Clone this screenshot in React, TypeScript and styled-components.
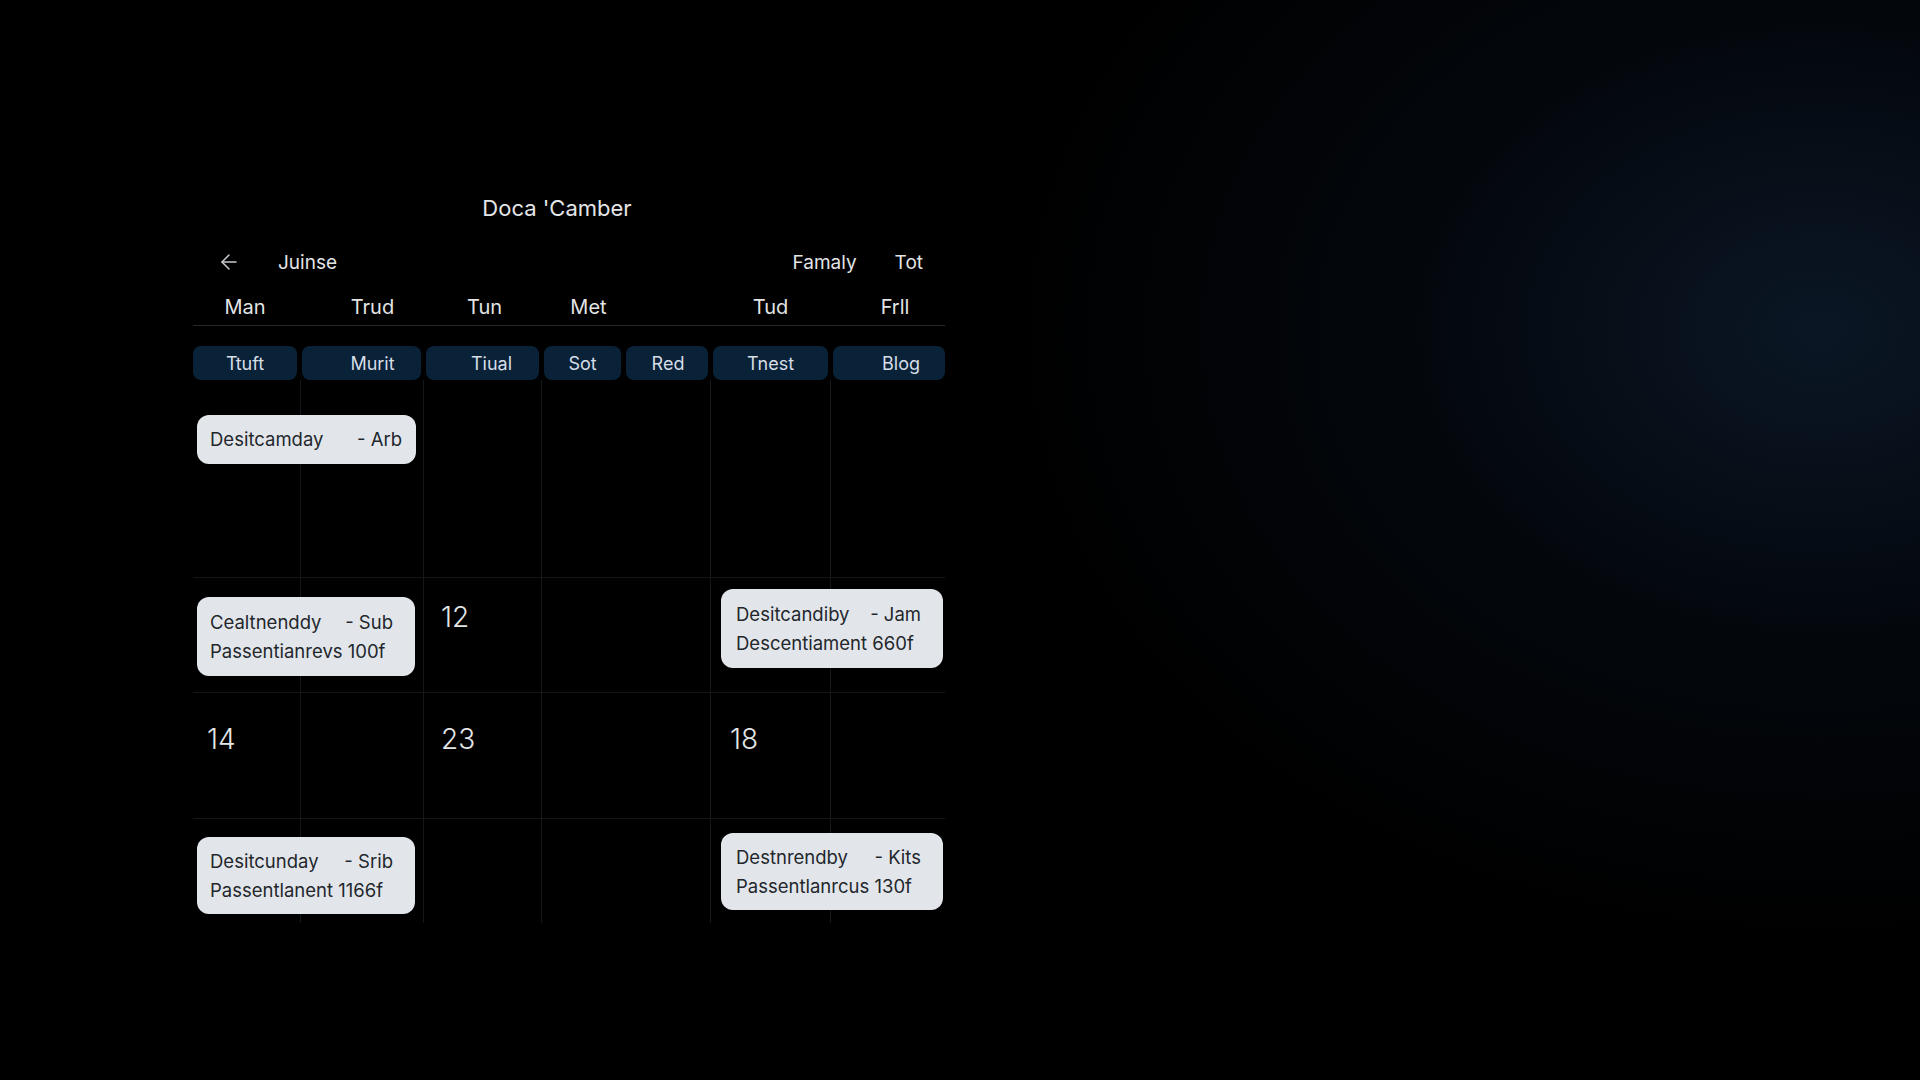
import styled, { createGlobalStyle } from "styled-components"
import { ArrowLeft } from "lucide-react"

const GlobalStyle = createGlobalStyle`
    html, body {
        margin: 0;
        padding: 0;
        background: #000000;
    }
    body {
        font-family: "Inter", "Liberation Sans", sans-serif;
        color: #e6e8ea;
    }
`

const Page = styled.div`
    width: 1920px;
    height: 1080px;
    overflow: hidden;
    background:
        radial-gradient(ellipse 820px 620px at 1820px 330px, rgba(12, 25, 41, 0.9) 0%, rgba(6, 13, 23, 0.55) 50%, rgba(0, 0, 0, 0) 100%),
        #000000;
    padding: 193px 0 0 193px;
    box-sizing: border-box;
`

const Calendar = styled.div`
    width: 752px;
    display: flex;
    flex-direction: column;
`

const Title = styled.h1`
    margin: 0;
    height: 30px;
    line-height: 30px;
    font-size: 22px;
    font-weight: 400;
    text-align: center;
    padding-right: 24px;
    color: #e4e6e8;
`

const NavRow = styled.div`
    margin-top: 20px;
    height: 38px;
    display: flex;
    align-items: center;
    padding: 0 22px 0 24px;
    font-size: 19px;
    color: #e2e4e6;
`

const BackButton = styled.span`
    display: flex;
    color: #c8cbce;
    margin-right: 37px;
`

const NavLinks = styled.div`
    margin-left: auto;
    display: flex;
    gap: 38px;
`

const cols = "104px 119px 113px 77px 82px 115px 112px"

const DayHeader = styled.div`
    margin-top: 8px;
    height: 36px;
    display: grid;
    grid-template-columns: ${cols};
    column-gap: 5px;
    align-items: center;
    border-bottom: 1px solid #24282c;
    font-size: 20px;
    color: #e2e4e6;
`

const DayLabel = styled.span<{ $shift?: number }>`
    text-align: center;
    padding-left: ${(p) => (p.$shift || 0) * 2}px;
`

const PillRow = styled.div`
    margin-top: 20px;
    display: grid;
    grid-template-columns: ${cols};
    column-gap: 5px;
`

const Pill = styled.div<{ $shift?: number }>`
    height: 34px;
    border-radius: 8px;
    background: #0a2237;
    display: flex;
    align-items: center;
    justify-content: center;
    padding-left: ${(p) => (p.$shift || 0) * 2}px;
    font-size: 18px;
    color: #d6dee8;
`

const Body = styled.div`
    display: grid;
    grid-template-columns: 107px 123px 118px 82px 87px 120px 115px;
    grid-template-rows: 197px 115px 126px 105px;
`

const Cell = styled.div<{ $left: boolean; $top: boolean }>`
    border-left: ${(p) => (p.$left ? "1px solid #15181b" : "none")};
    border-top: ${(p) => (p.$top ? "1px solid #14171a" : "none")};
`

type CardProps = {
    $row: number
    $col: number
    $top: number
    $left: number
    $right: number
    $h: number
    $padL: number
    $padR: number
}

const Card = styled.div<CardProps>`
    grid-row: ${(p) => p.$row};
    grid-column: ${(p) => p.$col} / span 2;
    align-self: start;
    margin: ${(p) => `${p.$top}px ${p.$right}px 0 ${p.$left}px`};
    height: ${(p) => p.$h}px;
    box-sizing: border-box;
    background: #e2e6eb;
    border-radius: 12px;
    padding: ${(p) => `0 ${p.$padR}px 0 ${p.$padL}px`};
    display: flex;
    flex-direction: column;
    justify-content: center;
    font-size: 18.5px;
    line-height: 29px;
    color: #23272c;
    z-index: 1;
`

const CardLine = styled.div`
    display: flex;
    justify-content: space-between;
    white-space: nowrap;
`

const DateNum = styled.div<{ $row: number; $col: number; $top: number; $left: number }>`
    grid-row: ${(p) => p.$row};
    grid-column: ${(p) => p.$col};
    align-self: start;
    margin: ${(p) => `${p.$top}px 0 0 ${p.$left}px`};
    font-size: 28px;
    font-weight: 300;
    line-height: 32px;
    color: #e4e6e8;
    z-index: 1;
`

const days = [
    { label: "Man", shift: 0 },
    { label: "Trud", shift: 11 },
    { label: "Tun", shift: 2 },
    { label: "Met", shift: 6 },
    { label: "", shift: 0 },
    { label: "Tud", shift: -1 },
    { label: "Frll", shift: 6 },
]

const pills = [
    { label: "Ttuft", shift: 0 },
    { label: "Murit", shift: 11 },
    { label: "Tiual", shift: 9 },
    { label: "Sot", shift: -2 },
    { label: "Red", shift: 1 },
    { label: "Tnest", shift: -2 },
    { label: "Blog", shift: 12 },
]

const events = [
    { row: 1, col: 1, top: 35, left: 4, right: 7, h: 49, padL: 13, padR: 14, lines: [["Desitcamday", "- Arb"]] },
    { row: 2, col: 1, top: 20, left: 4, right: 8, h: 79, padL: 13, padR: 22, lines: [["Cealtnenddy", "- Sub"], ["Passentianrevs 100f", ""]] },
    { row: 2, col: 6, top: 12, left: 11, right: 2, h: 79, padL: 15, padR: 22, lines: [["Desitcandiby", "- Jam"], ["Descentiament 660f", ""]] },
    { row: 4, col: 1, top: 19, left: 4, right: 8, h: 77, padL: 13, padR: 22, lines: [["Desitcunday", "- Srib"], ["Passentlanent 1166f", ""]] },
    { row: 4, col: 6, top: 15, left: 11, right: 2, h: 77, padL: 15, padR: 22, lines: [["Destnrendby", "- Kits"], ["Passentlanrcus 130f", ""]] },
]

const dates = [
    { n: "12", row: 2, col: 3, top: 24, left: 18 },
    { n: "14", row: 3, col: 1, top: 31, left: 14 },
    { n: "23", row: 3, col: 3, top: 31, left: 18 },
    { n: "18", row: 3, col: 6, top: 31, left: 20 },
]

const lineCols = [2, 3, 4, 6, 7]

export default function App() {
    const cells = []
    for (let r = 1; r <= 4; r++) {
        for (let c = 1; c <= 7; c++) {
            cells.push(
                <Cell
                    key={`${r}-${c}`}
                    style={{ gridRow: r, gridColumn: c }}
                    $left={lineCols.includes(c)}
                    $top={r > 1}
                />
            )
        }
    }

    return <>
        <GlobalStyle />
        <Page>
            <Calendar>
                <Title>Doca 'Camber</Title>
                <NavRow>
                    <BackButton><ArrowLeft size={24} strokeWidth={1.5} /></BackButton>
                    <span>Juinse</span>
                    <NavLinks>
                        <span>Famaly</span>
                        <span>Tot</span>
                    </NavLinks>
                </NavRow>
                <DayHeader>
                    {days.map((d, i) => (
                        <DayLabel key={i} $shift={d.shift}>{d.label}</DayLabel>
                    ))}
                </DayHeader>
                <PillRow>
                    {pills.map((p, i) => (
                        <Pill key={i} $shift={p.shift}>{p.label}</Pill>
                    ))}
                </PillRow>
                <Body>
                    {cells}
                    {events.map((e, i) => (
                        <Card
                            key={i}
                            $row={e.row}
                            $col={e.col}
                            $top={e.top}
                            $left={e.left}
                            $right={e.right}
                            $h={e.h}
                            $padL={e.padL}
                            $padR={e.padR}
                        >
                            {e.lines.map((l, j) => (
                                <CardLine key={j}>
                                    <span>{l[0]}</span>
                                    {l[1] && <span>{l[1]}</span>}
                                </CardLine>
                            ))}
                        </Card>
                    ))}
                    {dates.map((d) => (
                        <DateNum key={d.n} $row={d.row} $col={d.col} $top={d.top} $left={d.left}>{d.n}</DateNum>
                    ))}
                </Body>
            </Calendar>
        </Page>
    </>
}
